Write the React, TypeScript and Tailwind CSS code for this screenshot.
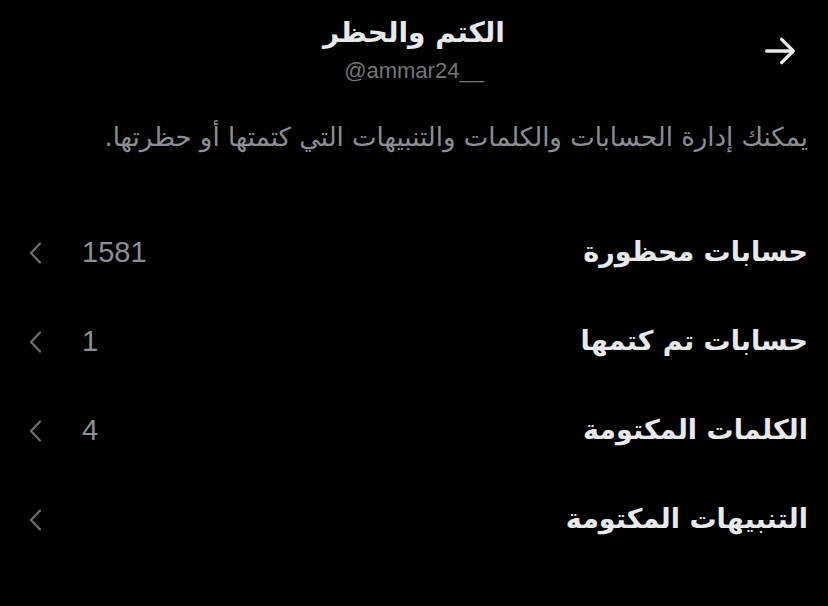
import React from 'react';

const rows: { label: string; count?: string }[] = [
  { label: 'حسابات محظورة', count: '1581' },
  { label: 'حسابات تم كتمها', count: '1' },
  { label: 'الكلمات المكتومة', count: '4' },
  { label: 'التنبيهات المكتومة' },
];

const Chevron = () => (
  <svg width="14" height="22" viewBox="0 0 14 22" fill="none" className="shrink-0">
    <path d="M12 1.5 L3 11 L12 20.5" stroke="#6b6f74" strokeWidth="2.2" strokeLinecap="round" strokeLinejoin="round" />
  </svg>
);

export default function App() {
  return (
    <div dir="rtl" className="w-[828px] h-[606px] bg-black text-[#e7e9ea] overflow-hidden" style={{ fontFamily: '"DejaVu Sans", "Noto Sans", sans-serif' }}>
      <header className="flex items-start h-[108px] px-5 pt-3">
        <div className="w-[60px] h-[78px] flex items-center justify-start pr-2">
          <svg width="40" height="40" viewBox="0 0 24 24" fill="none">
            <path d="M4 12 H20 M13 5 L20 12 L13 19" stroke="#e7e9ea" strokeWidth="2" strokeLinecap="round" strokeLinejoin="round" />
          </svg>
        </div>
        <div className="flex-1 flex flex-col items-center pl-[60px]">
          <h1 className="text-[28px] font-bold leading-[42px]">الكتم والحظر</h1>
          <div dir="ltr" className="mt-[3px] text-[22px] text-[#71767b] leading-[28px]" style={{ fontFamily: '"Liberation Sans", sans-serif' }}>@ammar24__</div>
        </div>
      </header>
      <p className="px-5 text-[26px] text-[#8b8f94] leading-[58px]">
        يمكنك إدارة الحسابات والكلمات والتنبيهات التي كتمتها أو حظرتها.
      </p>
      <ul className="mt-[42px] pl-[28px] pr-5">
        {rows.map((r) => (
          <li key={r.label} className="flex items-center justify-between h-[89px]">
            <span className="text-[27px] font-bold">{r.label}</span>
            <span className="flex items-center gap-[40px]">
              {r.count && (
                <span className="text-[29px] text-[#8b8f94]" style={{ fontFamily: '"Liberation Sans", sans-serif' }}>{r.count}</span>
              )}
              <Chevron />
            </span>
          </li>
        ))}
      </ul>
    </div>
  );
}
